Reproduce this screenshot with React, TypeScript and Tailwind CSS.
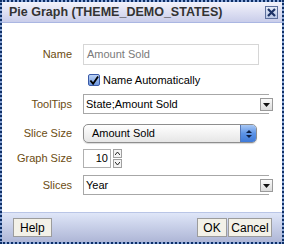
import React from "react";

function Label({ children }: { children: React.ReactNode }) {
  return (
    <div className="w-[70px] shrink-0 text-right text-[11px] text-[#6b4c11]">
      {children}
    </div>
  );
}

function DropArrow() {
  return (
    <div className="absolute right-[-4px] top-[3px] w-[13px] h-[13px] border border-[#9a9a9a] bg-gradient-to-b from-[#fafafa] to-[#dcdcdc] flex items-center justify-center">
      <svg width="7" height="4" viewBox="0 0 7 4">
        <path d="M0 0 L7 0 L3.5 4 Z" fill="#111" />
      </svg>
    </div>
  );
}

function Select({ value }: { value: string }) {
  return (
    <div className="relative w-[186px] h-[20px] border border-[#a7a7a7] border-r-0 bg-white flex items-center pl-[2px] text-[11px] text-black">
      {value}
      <DropArrow />
    </div>
  );
}

export default function App() {
  return (
    <div
      className="w-[284px] h-[244px] border-2 border-dotted border-[#0e2f66] bg-[#8aa6d8] flex flex-col"
      style={{ fontFamily: '"Liberation Sans", Arial, sans-serif' }}
    >
      {/* title bar */}
      <div className="h-[21px] shrink-0 bg-gradient-to-b from-[#f3f3fb] to-[#c9cdea] border-b border-[#aab6e2] flex items-center justify-between pl-[7px] pr-[4px]">
        <span className="text-[12.5px] font-bold text-[#333]">
          Pie Graph (THEME_DEMO_STATES)
        </span>
        <div className="w-[13px] h-[13px] border border-[#5d6f9c] bg-gradient-to-b from-[#e6ecf8] to-[#b9c6e6] flex items-center justify-center">
          <svg width="9" height="9" viewBox="0 0 9 9">
            <path d="M1 1 L8 8 M8 1 L1 8" stroke="#1d3266" strokeWidth="2.2" />
          </svg>
        </div>
      </div>

      {/* body */}
      <div className="flex-1 bg-white flex flex-col pt-[21px]">
        <div className="flex items-center gap-[11px] h-[21px]">
          <Label>Name</Label>
          <div className="w-[176px] h-[21px] border border-[#d6d6d6] flex items-center pl-[3px] text-[11px] text-[#7a7a7a]">
            Amount Sold
          </div>
        </div>

        <div className="flex items-center mt-[8px] h-[14px] pl-[86px]">
          <div className="w-[12px] h-[12px] rounded-[2px] border border-[#3a5aa8] bg-gradient-to-b from-[#bcd2f4] to-[#6e98de] flex items-center justify-center">
            <svg width="11" height="11" viewBox="0 0 11 11">
              <path d="M1.5 5.5 L4.5 9 L10 1" stroke="#000" strokeWidth="2" fill="none" />
            </svg>
          </div>
          <span className="ml-[3px] text-[11px] text-black">Name Automatically</span>
        </div>

        <div className="flex items-center gap-[11px] mt-[7px]">
          <Label>ToolTips</Label>
          <Select value="State;Amount Sold" />
        </div>

        <div className="flex items-center gap-[11px] mt-[10px]">
          <Label>Slice Size</Label>
          <div className="w-[174px] h-[19px] rounded-[5px] border border-[#8e8e8e] bg-gradient-to-b from-[#ffffff] to-[#e6e6e6] flex items-center overflow-hidden shadow-[0_1px_1px_rgba(0,0,0,0.15)]">
            <span className="flex-1 pl-[8px] text-[11px] text-black">Amount Sold</span>
            <div className="w-[16px] h-full bg-gradient-to-b from-[#a9c8f4] via-[#5c93e6] to-[#3f7ad8] border-l border-[#5578b8] flex flex-col items-center justify-center gap-[2px]">
              <svg width="6" height="3" viewBox="0 0 6 3">
                <path d="M0 3 L3 0 L6 3 Z" fill="#0c1f45" />
              </svg>
              <svg width="6" height="3" viewBox="0 0 6 3">
                <path d="M0 0 L6 0 L3 3 Z" fill="#0c1f45" />
              </svg>
            </div>
          </div>
        </div>

        <div className="flex items-center gap-[11px] mt-[6px]">
          <Label>Graph Size</Label>
          <div className="flex items-center gap-[2px]">
            <div className="w-[28px] h-[19px] border border-[#b0b0b0] flex items-center justify-end pr-[2px] text-[11px] text-black">
              10
            </div>
            <div className="flex flex-col gap-[1px]">
              <div className="w-[9px] h-[9px] border border-[#a0a0a0] bg-[#f4f4f4] flex items-center justify-center">
                <svg width="5" height="3" viewBox="0 0 5 3">
                  <path d="M0 3 L2.5 0 L5 3" stroke="#222" fill="none" />
                </svg>
              </div>
              <div className="w-[9px] h-[9px] border border-[#a0a0a0] bg-[#f4f4f4] flex items-center justify-center">
                <svg width="5" height="3" viewBox="0 0 5 3">
                  <path d="M0 0 L2.5 3 L5 0" stroke="#222" fill="none" />
                </svg>
              </div>
            </div>
          </div>
        </div>

        <div className="flex items-center gap-[11px] mt-[7px]">
          <Label>Slices</Label>
          <Select value="Year" />
        </div>
      </div>

      {/* footer */}
      <div className="h-[30px] shrink-0 border-t border-[#b9c5e6] bg-gradient-to-b from-[#dfe6f8] to-[#aeb6d6] flex items-center justify-between pl-[11px] pr-[10px]">
        <button className="h-[19px] px-[6px] border border-[#9c9c9c] bg-[#f3f1e8] text-[12px] text-black">
          Help
        </button>
        <div className="flex gap-[1px]">
          <button className="h-[19px] w-[30px] border border-[#9c9c9c] bg-[#f3f1e8] text-[12px] text-black">
            OK
          </button>
          <button className="h-[19px] w-[44px] border border-[#9c9c9c] bg-[#f3f1e8] text-[12px] text-black">
            Cancel
          </button>
        </div>
      </div>
    </div>
  );
}
